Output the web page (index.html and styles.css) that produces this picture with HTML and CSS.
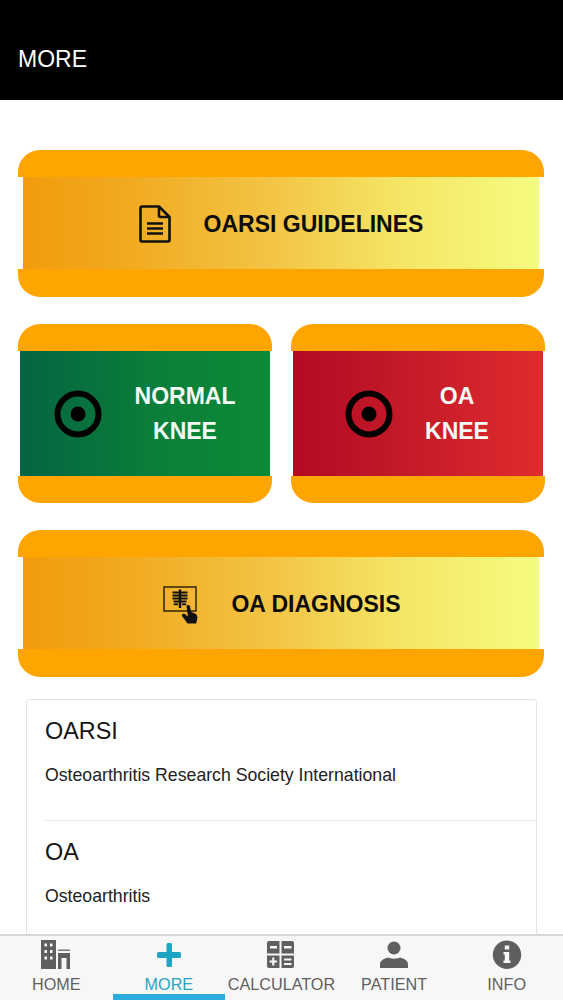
FILE: index.html
```html
<!DOCTYPE html>
<html lang="en">
<head>
<meta charset="utf-8">
<title>More</title>
<link rel="stylesheet" href="styles.css">
</head>
<body>
<div class="app">
  <header class="header"><h1 class="title">MORE</h1></header>
  <main class="content">
    <a class="btn">
      <div class="band band-top"></div>
      <div class="face face-wide face-yellow">
        <svg class="icon-doc" viewBox="0 0 32 38" width="32" height="38"><path d="M3 1.500H20L30.500 12V35a1.500 1.500 0 0 1-1.500 1.500H3A1.500 1.500 0 0 1 1.500 35V3A1.500 1.500 0 0 1 3 1.500Z" fill="none" stroke="#111" stroke-width="2.600" stroke-linejoin="round"/><path d="M20 1.500V10.500a1.500 1.500 0 0 0 1.500 1.500H30.500" fill="none" stroke="#111" stroke-width="2.600"/><path d="M8 18.500H24M8 23.500H24M8 28.500H24" stroke="#111" stroke-width="2.600"/></svg>
        <span class="label label-dark label-nudge">OARSI GUIDELINES</span>
      </div>
      <div class="band band-bottom"></div>
    </a>
    <div class="row">
      <a class="btn btn-half">
        <div class="band band-top"></div>
        <div class="face face-half face-green">
          <svg class="icon-target icon-target-left" viewBox="0 0 48 48" width="48" height="48"><circle cx="24" cy="24" r="20.500" fill="none" stroke="#000" stroke-width="6"/><circle cx="24" cy="24" r="7.500" fill="#000"/></svg>
          <span class="label label-light label-stack">NORMAL<br>KNEE</span>
        </div>
        <div class="band band-bottom"></div>
      </a>
      <a class="btn btn-half">
        <div class="band band-top"></div>
        <div class="face face-half face-red">
          <svg class="icon-target icon-target-right" viewBox="0 0 48 48" width="48" height="48"><circle cx="24" cy="24" r="20.500" fill="none" stroke="#000" stroke-width="6"/><circle cx="24" cy="24" r="7.500" fill="#000"/></svg>
          <span class="label label-light label-stack label-stack-right">OA<br>KNEE</span>
        </div>
        <div class="band band-bottom"></div>
      </a>
    </div>
    <a class="btn">
      <div class="band band-top"></div>
      <div class="face face-wide face-yellow face-diagnosis">
        <svg class="icon-xray" viewBox="0 0 36 38" width="36" height="38"><rect x="1" y="1" width="32" height="24" fill="none" stroke="#221a08" stroke-width="1.400"/><path d="M17 3.500V22" stroke="#111" stroke-width="2.400"/><path d="M9.500 6.500H24.500M9.500 9.500H24.500M9.500 12.500H24.500M10.500 15.500H23.500M11 19C12 17.800 13.500 18 15 18.500M19 18.500C20.500 18 22 17.800 23 19" stroke="#111" stroke-width="1.900" fill="none"/><path d="M23.500 20.500C24 18.500 26.500 18.500 27 20.500L28.200 26L32 27.500C33.800 28.500 34.800 30 34.300 32.500L33.200 37.500H24.500L19 30C18.500 28.200 20.300 27.200 22 28.300L25 30.500Z" fill="#111"/></svg>
        <span class="label label-dark label-nudge">OA DIAGNOSIS</span>
      </div>
      <div class="band band-bottom"></div>
    </a>
    <section class="card">
      <div class="item">
        <h2 class="item-title">OARSI</h2>
        <p class="item-text">Osteoarthritis Research Society International</p>
      </div>
      <div class="item">
        <h2 class="item-title">OA</h2>
        <p class="item-text">Osteoarthritis</p>
      </div>
    </section>
  </main>
  <nav class="tabs">
    <a class="tab">
      <svg class="tab-icon" viewBox="0 0 30 30" width="30" height="30"><path fill-rule="evenodd" d="M0 0H15V29H0ZM3.500 3.500V6.500H6V3.500ZM9 3.500V6.500H11.500V3.500ZM3.500 10V13H6V10ZM9 10V13H11.500V10ZM3.500 16.500V19.500H6V16.500ZM9 16.500V19.500H11.500V16.500Z" fill="#5f5f62"/><path d="M17 9.500H29V11H17Z" fill="#77777a"/><path fill-rule="evenodd" d="M17 13H29V29H25.500V18H20.500V29H17Z" fill="#5f5f62"/></svg>
      <span class="tab-label">HOME</span>
    </a>
    <a class="tab tab-active">
      <svg class="tab-icon" viewBox="0 0 30 30" width="30" height="30"><path d="M12.500 4.500a1.500 1.500 0 0 1 1.500-1.500h2.500a1.500 1.500 0 0 1 1.500 1.500V12H25.500a1.500 1.500 0 0 1 1.500 1.500v3a1.500 1.500 0 0 1-1.500 1.500H18V25.500a1.500 1.500 0 0 1-1.500 1.500H14a1.500 1.500 0 0 1-1.500-1.500V18H4.500A1.500 1.500 0 0 1 3 16.500v-3A1.500 1.500 0 0 1 4.500 12H12.500Z" fill="#1fa5c4"/></svg>
      <span class="tab-label">MORE</span>
    </a>
    <a class="tab">
      <svg class="tab-icon" viewBox="0 0 30 30" width="30" height="30"><path fill-rule="evenodd" d="M3 1H13.500V13.500H1V3a2 2 0 0 1 2-2ZM4 6V8.500H11V6Z" fill="#5f5f62"/><path fill-rule="evenodd" d="M15.500 1H26a2 2 0 0 1 2 2V13.500H15.500ZM18 6V8.500H25.500V6Z" fill="#5f5f62"/><path fill-rule="evenodd" d="M1 15.500H13.500V28H3a2 2 0 0 1-2-2ZM6.200 17.500V20.500H3.500V22.500H6.200V25.500H8.300V22.500H11V20.500H8.300V17.500Z" fill="#5f5f62"/><path fill-rule="evenodd" d="M15.500 15.500H28V26a2 2 0 0 1-2 2H15.500ZM18 18.500V20.500H25.500V18.500ZM18 23V25H25.500V23Z" fill="#5f5f62"/></svg>
      <span class="tab-label">CALCULATOR</span>
    </a>
    <a class="tab">
      <svg class="tab-icon" viewBox="0 0 30 30" width="30" height="30"><circle cx="15" cy="8" r="6.500" fill="#5f5f62"/><path d="M1 28V24.500C1 20.500 5 18.500 9 17.500C11.500 19 18.500 19 21 17.500C25 18.500 29 20.500 29 24.500V28Z" fill="#5f5f62"/></svg>
      <span class="tab-label">PATIENT</span>
    </a>
    <a class="tab">
      <svg class="tab-icon" viewBox="0 0 30 30" width="30" height="30"><path fill-rule="evenodd" d="M15 .5A14.200 14.200 0 1 1 15 28.900A14.200 14.200 0 0 1 15 .5ZM12.800 5.500V9.500H17.200V5.500ZM11.500 12V14.500H12.800V20.500H11.500V23H18.500V20.500H17.200V12Z" fill="#5f5f62"/></svg>
      <span class="tab-label">INFO</span>
    </a>
  </nav>
</div>
</body>
</html>
```
FILE: styles.css
```css
* { box-sizing: border-box; }
html, body { margin: 0; padding: 0; }
body { font-family: "Liberation Sans", Arial, sans-serif; background: #fff; }
.app { width: 563px; height: 1000px; display: flex; flex-direction: column; overflow: hidden; }
.header { height: 100px; background: #000; flex: none; display: flex; align-items: center; padding: 18px 18px 0; }
.title { margin: 0; color: #fff; font-size: 23px; font-weight: 400; line-height: 1; }
.content { flex: 1; min-height: 0; overflow: hidden; padding: 50px 18px 0 18px; display: flex; flex-direction: column; gap: 27px; }
.btn { display: flex; flex-direction: column; align-items: stretch; width: 526px; flex: none; }
.band { height: 27px; background: #ffa502; }
.band-top { border-radius: 22px 22px 0 0; }
.band-bottom { border-radius: 0 0 22px 22px; height: 28px; }
.face { display: flex; align-items: center; }
.face-wide { height: 92px; margin: 0 5px; justify-content: center; gap: 33px; }
.face-yellow { background: linear-gradient(90deg, #f29c0d 0%, #f1a81e 18%, #f3c444 48%, #f5e465 72%, #f5fc80 100%); }
.face-half { height: 125px; margin: 0 2px; }
.face-green { background: linear-gradient(90deg, #066442 0%, #0a7f39 55%, #0c8a35 100%); }
.face-red { background: linear-gradient(90deg, #b20a24 0%, #c41a28 45%, #e12b2e 100%); }
.face-diagnosis { gap: 32px; padding-left: 2px; }
.row { display: flex; gap: 19px; width: 527px; flex: none; }
.row .band-bottom { height: 27px; }
.btn-half { width: 254px; }
.icon-doc { margin-top: 2px; flex: none; }
.icon-xray { margin: 4px 0 0 0; flex: none; }
.icon-target { flex: none; }
.icon-target-left { margin-left: 34px; }
.icon-target-right { margin-left: 52px; }
.label { font-weight: 700; font-size: 23px; line-height: 35px; }
.label-nudge { padding-top: 2px; }
.label-dark { color: #0c0c0c; }
.label-light { color: #f3fbf4; }
.label-stack { flex: 1; text-align: center; padding-right: 2px; }
.label-stack-right { padding-right: 22px; }
.card { width: 511px; margin: -5px 0 0 8px; flex: none; height: 300px; background: #fff; border: 1px solid #e4e4e6; border-radius: 3px; padding-left: 18px; }
.item { height: 121px; border-bottom: 1px solid #e6e6e8; padding-top: 17px; }
.item-title { margin: 0; font-size: 23.400px; font-weight: 400; line-height: 28px; color: #151515; }
.item-text { margin: 20px 0 0; font-size: 17.700px; line-height: 20px; color: #222; }
.tabs { flex: none; height: 66px; background: #f7f7f8; border-top: 2px solid #d8d8da; display: grid; grid-template-columns: repeat(5, 112.600px); }
.tab { display: flex; flex-direction: column; align-items: center; padding-top: 4px; color: #5f5f62; }
.tab-icon { display: block; flex: none; }
.tab-label { font-size: 16.200px; line-height: 20px; margin-top: 4px; flex: 1; }
.tab-active { color: #2aa3bd; border-bottom: 6px solid #2aabdb; }
```
